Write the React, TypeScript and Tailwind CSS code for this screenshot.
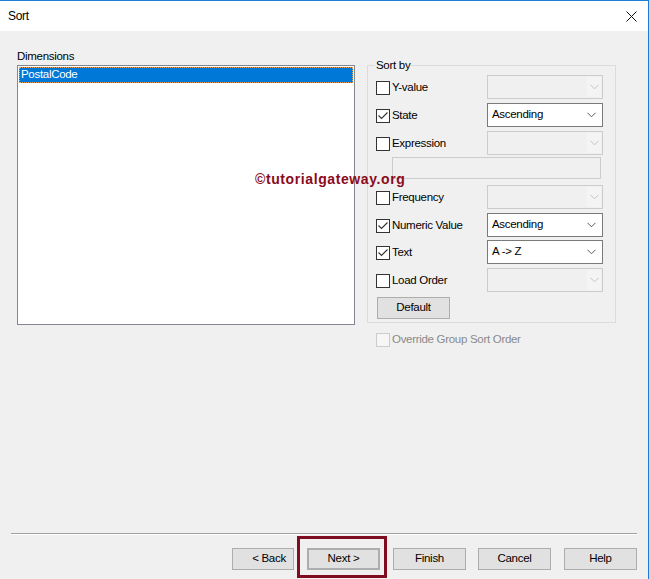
import React from "react";

const FONT = "font-['Segoe_UI','Liberation_Sans',Arial,sans-serif] tracking-[-0.3px]";

function Chevron({ disabled }: { disabled?: boolean }) {
  return (
    <svg width="9" height="6" viewBox="0 0 9 6" className="shrink-0">
      <path d="M0.5 0.8 L4.5 4.8 L8.5 0.8" fill="none" stroke={disabled ? "#c4c4c4" : "#5a5a5a"} strokeWidth="1" />
    </svg>
  );
}

function Combo({ value, disabled }: { value?: string; disabled?: boolean }) {
  if (disabled) {
    return (
      <div className="w-[116px] h-[24px] border border-[#cccccc] bg-[#f0f0f0] flex items-stretch p-[1px]">
        <div className="flex-1 bg-[#f0f0f0]" />
        <div className="w-[14px] bg-[#f4f4f4] flex items-center justify-center">
          <Chevron disabled />
        </div>
      </div>
    );
  }
  return (
    <div className="w-[116px] h-[24px] border border-[#7a7a7a] bg-white flex items-center pl-[4px] pr-[6px]">
      <span className="flex-1 text-[11.5px] text-black leading-none">{value}</span>
      <Chevron />
    </div>
  );
}

function Check({ checked, disabled }: { checked?: boolean; disabled?: boolean }) {
  return (
    <div
      className={
        disabled
          ? "w-[14px] h-[14px] border border-[#cccccc] bg-[#f6f6f6] shrink-0"
          : "w-[14px] h-[14px] border border-[#333333] bg-white shrink-0 flex items-center justify-center"
      }
    >
      {checked && (
        <svg width="12" height="12" viewBox="0 0 12 12">
          <path d="M1.5 5.5 L4.5 8.5 L10.5 2.5" fill="none" stroke="#333" strokeWidth="1.1" />
        </svg>
      )}
    </div>
  );
}

function Row({ label, checked, combo, className }: { label: string; checked?: boolean; combo?: string; className?: string }) {
  return (
    <div className={"flex items-center h-[24px] " + (className ?? "")}>
      <div className="w-[111px] flex items-center gap-[2px] pt-[1px]">
        <Check checked={checked} />
        <span className="text-[11.5px] text-black leading-none pt-[1px]">{label}</span>
      </div>
      <Combo value={combo} disabled={!combo} />
    </div>
  );
}

function Btn({ label, className }: { label: string; className?: string }) {
  return (
    <div
      className={
        "h-[22px] bg-[#e1e1e1] border border-[#adadad] flex items-center justify-center text-[11.5px] text-black " +
        (className ?? "")
      }
    >
      {label}
    </div>
  );
}

export default function App() {
  return (
    <div
      className={
        "relative w-[649px] h-[579px] bg-[#f0f0f0] border-t border-r border-[#1a7fd4] flex flex-col overflow-hidden " +
        FONT
      }
    >
      {/* Title bar */}
      <div className="h-[30px] bg-white flex items-center justify-between pl-[8px] pr-[11px] shrink-0">
        <span className="text-[12px] text-black">Sort</span>
        <svg width="11" height="11" viewBox="0 0 11 11">
          <path d="M0.5 0.5 L10.5 10.5 M10.5 0.5 L0.5 10.5" stroke="#111" strokeWidth="1" />
        </svg>
      </div>

      {/* Body */}
      <div className="flex pl-[17px] pt-[17px]">
        {/* Dimensions */}
        <div className="w-[338px] flex flex-col">
          <div className="h-[16px] leading-[16px] text-[11.5px] text-black">Dimensions</div>
          <div className="mt-[1px] h-[260px] bg-white border border-[#828790] p-[1px]">
            <div className="h-[16px] bg-[#0078d7] border border-dotted border-[#e8a25a] flex items-center pl-[1px]">
              <span className="text-[11.5px] text-white leading-none">PostalCode</span>
            </div>
          </div>
        </div>

        {/* Sort by */}
        <div className="ml-[12px] w-[249px] flex flex-col">
          <div className="relative mt-[17px] h-[258px] border border-[#dcdcdc] pt-[9px] pl-[8px] flex flex-col">
            <span className="absolute -top-[8px] left-[7px] px-[1px] bg-[#f0f0f0] text-[11.5px] leading-[14px] text-black">
              Sort by
            </span>
            <Row label="Y-value" />
            <Row label="State" checked combo="Ascending" className="mt-[4px]" />
            <Row label="Expression" className="mt-[4px]" />
            <div className="mt-[2px] ml-[16px] w-[209px] h-[22px] border border-[#cccccc] bg-[#f0f0f0]" />
            <Row label="Frequency" className="mt-[6px]" />
            <Row label="Numeric Value" checked combo="Ascending" className="mt-[4px]" />
            <Row label="Text" checked combo="A -> Z" className="mt-[3px]" />
            <Row label="Load Order" className="mt-[4px]" />
            <Btn label="Default" className="mt-[5px] ml-[1px] w-[73px] h-[21px]" />
          </div>
          <div className="mt-[10px] pl-[9px] flex items-center gap-[2px]">
            <Check disabled />
            <span className="text-[11.5px] text-[#8a8a8a] leading-none">Override Group Sort Order</span>
          </div>
        </div>
      </div>

      {/* Footer */}
      <div className="mt-auto flex flex-col pb-[9px]">
        <div className="ml-[11px] w-[626px] h-[1px] bg-[#a0a0a0]" />
        <div className="ml-[11px] w-[626px] h-[1px] bg-white" />
        <div className="mt-[13px] flex pl-[232px]">
          <Btn label="< Back" className="w-[62px] pl-[12px]" />
          <Btn label="Next >" className="ml-[13px] w-[73px] border-2 border-[#0078d7]" />
          <Btn label="Finish" className="ml-[13px] w-[73px]" />
          <Btn label="Cancel" className="ml-[12px] w-[73px]" />
          <Btn label="Help" className="ml-[13px] w-[73px]" />
        </div>
      </div>

      {/* Annotation overlays */}
      <div className="absolute left-[297px] top-[535px] w-[90px] h-[42px] border-[3px] border-[#7f0d22]" />
      <div className="absolute left-[255px] top-[168px] text-[14px] font-bold text-[#8b0a1c] font-['Liberation_Sans',Arial,sans-serif] tracking-[0.6px]">
        ©tutorialgateway.org
      </div>
    </div>
  );
}
